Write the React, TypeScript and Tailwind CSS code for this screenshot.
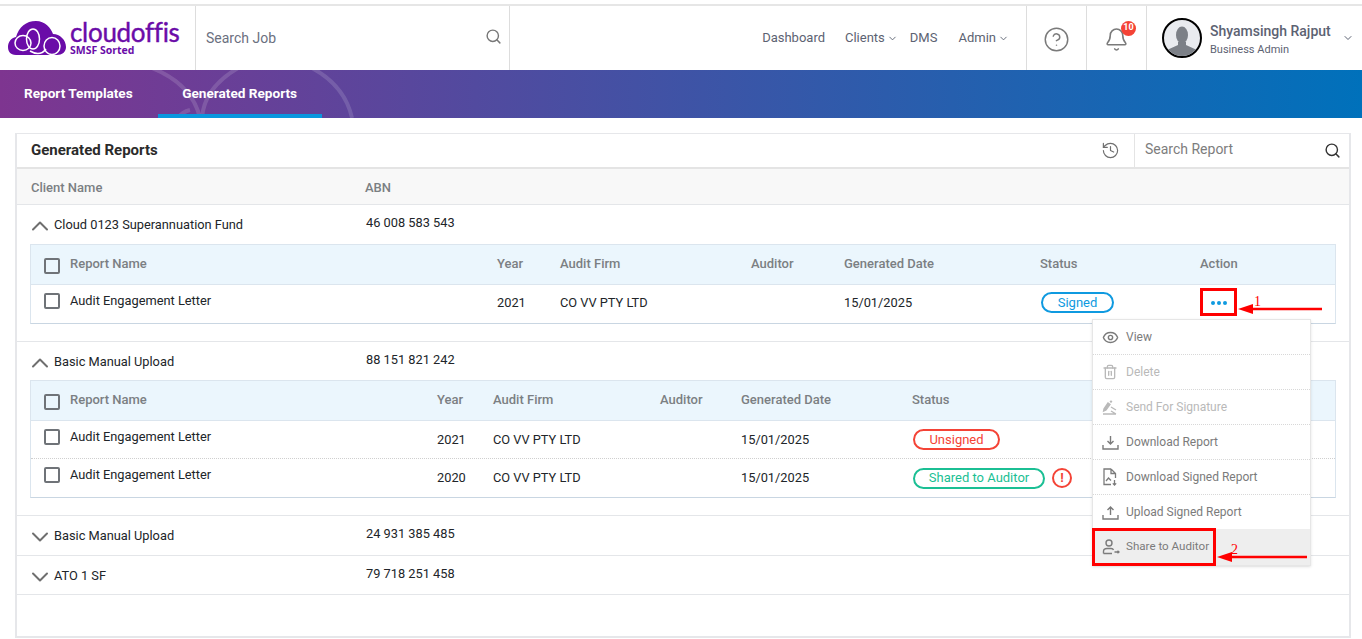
import React from "react";
import { ChevronDown, ChevronUp, CircleHelp, Bell, History, Search, Eye, Trash2 } from "lucide-react";

const roboto = { fontFamily: "Roboto, sans-serif" };

type Row = { year: string; status: React.ReactNode; action?: React.ReactNode };

const Pill = ({ label, color }: { label: string; color: "blue" | "red" | "green" }) => {
    const cls =
        color === "blue"
            ? "border-[#0f9ae0] text-[#0f9ae0] w-[73px]"
            : color === "red"
              ? "border-[#f44336] text-[#f44336] w-[87px]"
              : "border-[#1bbf94] text-[#1bbf94] w-[132px]";
    return (
        <span className={`ml-px inline-flex h-[21px] items-center justify-center rounded-full border-2 text-[13px] ${cls}`}>
            {label}
        </span>
    );
};

const Checkbox = () => <span className="block h-4 w-4 rounded-[2px] border-2 border-[#6f7378]" />;

const ReportTable = ({
    cols,
    rows,
    headClass,
    rowClass,
    nameClass,
    hideAction,
}: {
    cols: string;
    rows: Row[];
    headClass: string;
    rowClass: string;
    nameClass: string;
    hideAction?: boolean;
}) => (
    <div className="mx-[13px] border border-[#dbe5ee] border-b-[#c9d6e2]">
        <div className={`grid h-[39px] items-center bg-[#ebf6fd] text-[13px] font-medium text-[#7b7f83] ${cols} ${headClass}`}>
            <div className="flex items-center">
                <span className="ml-[13px] mr-[10px] translate-y-[2px]">
                    <Checkbox />
                </span>
                Report Name
            </div>
            <div>Year</div>
            <div>Audit Firm</div>
            <div>Auditor</div>
            <div>Generated Date</div>
            <div>Status</div>
            {/* sits under the open menu in the second table */}
            <div>{hideAction ? null : "Action"}</div>
        </div>
        {rows.map((row, index) => (
            <div
                key={index}
                className={`grid h-[38px] items-center border-t text-[12.8px] text-[#212529] last:h-[39px] ${cols} ${rowClass} ${
                    index === 0 ? "border-[#dbe5ee]" : "border-dotted border-[#cfcfcf]"
                }`}
            >
                <div className={`flex items-center ${nameClass}`}>
                    <span className="ml-[13px] mr-[10px]">
                        <Checkbox />
                    </span>
                    Audit Engagement Letter
                </div>
                <div>{row.year}</div>
                <div>CO VV PTY LTD</div>
                <div />
                <div>15/01/2025</div>
                <div className="flex items-center gap-[7px]">{row.status}</div>
                <div>{row.action}</div>
            </div>
        ))}
    </div>
);

const ClientRow = ({ name, abn, open, height }: { name: string; abn: string; open?: boolean; height: string }) => (
    <div className={`flex items-center text-[12.8px] text-[#212529] ${height}`}>
        <span className="ml-[9px] translate-y-[1px] text-[#6f6f6f]">
            {open ? <ChevronUp size={28} strokeWidth={1.7} /> : <ChevronDown size={28} strokeWidth={1.7} />}
        </span>
        <span className="w-[312px]">{name}</span>
        <span className="-translate-y-[2px]">{abn}</span>
    </div>
);

const SignIcon = () => (
    <svg width="16" height="16" viewBox="0 0 16 16" fill="none" stroke="currentColor" strokeWidth="1.4">
        <path d="M2 10 L6 4 L8 5.5 L4 11 L1.6 12 Z" fill="currentColor" />
        <circle cx="9" cy="2.6" r="1.2" fill="currentColor" stroke="none" />
        <path d="M9 8 L14 11 M1 15 H14 M9 12 L14 15" />
    </svg>
);

const SignedFileIcon = () => (
    <svg width="16" height="18" viewBox="0 0 16 18" fill="none" stroke="currentColor" strokeWidth="1.3">
        <path d="M9 1 H2 V16.5 H9 M9 1 L13.5 5.5 V10 M9 1 V5.5 H13.5" />
        <path d="M4 13 L6.5 10 L9 12.5" />
        <path d="M12.5 12 V17 M10.8 15.4 L12.5 17 L14.2 15.4" />
    </svg>
);

const ShareIcon = () => (
    <svg width="18" height="16" viewBox="0 0 18 16" fill="none" stroke="currentColor" strokeWidth="1.4">
        <circle cx="7" cy="4" r="3" />
        <path d="M1.5 14.5 V12.5 Q1.5 9.5 5 9.5 H9 Q11 9.5 11.5 11 M1.5 14.5 H10" />
        <path d="M12.5 13 H17 M15.5 11.8 L17 13 L15.5 14.2" />
    </svg>
);

const TrayIcon = ({ up }: { up?: boolean }) => (
    <svg width="17" height="15" viewBox="0 0 17 15" fill="none" stroke="currentColor" strokeWidth="1.4">
        <path d="M1 10 V14 H16 V10" />
        {up ? <path d="M8.5 10 V2 M5.5 5 L8.5 2 L11.5 5" /> : <path d="M8.5 1 V9 M5.5 6 L8.5 9 L11.5 6" />}
    </svg>
);

const menuItems = [
    { label: "View", icon: <Eye size={17} />, muted: false },
    { label: "Delete", icon: <Trash2 size={16} />, muted: true },
    { label: "Send For Signature", icon: <SignIcon />, muted: true },
    { label: "Download Report", icon: <TrayIcon />, muted: false },
    { label: "Download Signed Report", icon: <SignedFileIcon />, muted: false },
    { label: "Upload Signed Report", icon: <TrayIcon up />, muted: false },
    { label: "Share to Auditor", icon: <ShareIcon />, muted: false },
];

const RedArrow = ({ width }: { width: number }) => (
    <svg width={width} height="12" viewBox={`0 0 ${width} 12`} className="block">
        <path d={`M14 6 H${width}`} stroke="#f00" strokeWidth="2.4" />
        <path d="M0 6 L15 1 V11 Z" fill="#f00" />
    </svg>
);

const Logo = () => (
    <div className="ml-2 flex items-center">
        <svg width="58" height="34" viewBox="0 0 58 34">
            <path
                d="M8 34 C2 34 0 30 0 26 C0 21 3 17 8 16 C11 6 18 0 28 0 C37 0 43 7 45 13 C52 13 58 19 58 26 C58 31 54 34 49 34 Z"
                fill="#6a0ca8"
            />
            <g fill="none" stroke="#fff" strokeWidth="1.5">
                <ellipse cx="15" cy="22" rx="8" ry="7.5" />
                <ellipse cx="25" cy="18" rx="6.5" ry="10" />
                <ellipse cx="44" cy="25" rx="8" ry="8.5" />
                <path d="M22 30 Q32 36 38 28" />
            </g>
        </svg>
        <div className="ml-[4px] flex flex-col text-[#6a0ca8]" style={{ fontFamily: "Lato, sans-serif" }}>
            <span className="text-[26px] leading-[24px] tracking-[-0.3px] [-webkit-text-stroke:0.4px_#6a0ca8]">cloudoffis</span>
            <span className="text-[10.5px] font-bold leading-[12px]" style={{ fontFamily: "'Open Sans', sans-serif" }}>
                SMSF Sorted
            </span>
        </div>
    </div>
);

const Header = () => (
    <div className="flex h-[64px] items-stretch bg-white text-[#5c6272]">
        <div className="flex w-[196px] items-center border-r border-[#dddddd]">
            <Logo />
        </div>
        <div className="flex w-[314px] items-center justify-between border-r border-[#dddddd] pl-[10px] pr-[7px] text-[14px] text-[#6b7080]">
            Search Job
            <Search size={17} className="-translate-y-[2px] text-[#777777]" />
        </div>
        <div className="flex flex-1 items-center justify-end pr-[17px] text-[13px]">
            <span>Dashboard</span>
            <span className="ml-5 flex items-center">
                Clients
                <ChevronDown size={11} className="ml-[2px]" />
            </span>
            <span className="ml-[12px]">DMS</span>
            <span className="ml-[21px] flex items-center">
                Admin
                <ChevronDown size={11} className="ml-[2px]" />
            </span>
        </div>
        <div className="flex w-[61px] items-center justify-center border-x border-[#dddddd] pt-[2px] text-[#7a7a7a]">
            <CircleHelp size={27} strokeWidth={1.3} />
        </div>
        <div className="flex w-[60px] items-center justify-center border-r border-[#dddddd] pt-[2px] text-[#7a7a7a]">
            <div className="relative">
                <Bell size={25} strokeWidth={1.5} />
                <span className="absolute -right-[7px] -top-[6px] flex h-[15px] w-[15px] items-center justify-center rounded-full bg-[#f44336] text-[9px] font-bold text-white">
                    10
                </span>
            </div>
        </div>
        <div className="flex w-[215px] items-center pl-[15px]">
            <div className="flex h-10 w-10 items-end justify-center overflow-hidden rounded-full border-2 border-black bg-[#e9ebef]">
                <svg width="32" height="32" viewBox="0 0 32 32" fill="#7c8087">
                    <ellipse cx="16" cy="11" rx="6" ry="8.5" />
                    <path d="M12 18 H20 V21 L31 26 V32 H1 V26 L12 21 Z" />
                </svg>
            </div>
            <div className="ml-2 flex flex-col pt-[3px]">
                <span className="text-[14px] font-medium leading-[17px]">Shyamsingh Rajput</span>
                <span className="mt-[3px] text-[11px] leading-[13px]">Business Admin</span>
            </div>
            <ChevronDown size={12} className="ml-[11px]" />
        </div>
    </div>
);

const TabBar = () => (
    <div className="relative flex h-[48px] overflow-hidden bg-[linear-gradient(to_right,#7e3590,#0071bb)] text-[13.6px] font-bold text-white">
        <svg className="absolute left-[130px] top-0" width="240" height="48" viewBox="0 0 240 48" fill="none" stroke="#ffffff" strokeOpacity="0.14" strokeWidth="4">
            <path d="M22 -2 Q62 14 70 48" />
            <path d="M108 -2 Q74 18 72 48" />
            <path d="M182 -2 Q215 16 222 48" />
            <path d="M48 48 Q52 42 60 40" />
        </svg>
        <div className="relative ml-[24px] flex items-center pb-[2px]">Report Templates</div>
        <div className="relative ml-[25px] flex w-[164px] items-center justify-center border-b-[4px] border-[#0a97de] pt-[2px]">
            Generated Reports
        </div>
    </div>
);

const App = () => {
    return (
        <div className="relative h-[639px] overflow-hidden bg-white" style={roboto}>
            <div className="h-[6px] border-b-2 border-[#e6e6e6]" />
            <Header />
            <TabBar />
            <div className="ml-[15px] mt-[15px] h-[505px] w-[1336px] border-2 border-t border-[#e6e7ea]">
                <div className="flex h-[35px] items-center border-b-2 border-[#e4e4e4]">
                    <span className="ml-[14px] flex-1 text-[15px] font-bold text-[#2b2b2b]">Generated Reports</span>
                    <History size={19} strokeWidth={1.5} className="mr-[14px] text-[#6f6f6f]" />
                    <div className="flex h-full w-[215px] items-center justify-between border-l border-[#e4e4e4] pl-[10px] pr-[8px] text-[14px] text-[#7d7d7d]">
                        <span className="-translate-y-[1px]">Search Report</span>
                        <Search size={17} className="text-[#333333]" />
                    </div>
                </div>
                <div className="flex h-[36px] items-center border-b border-[#e4e6e9] bg-[#f8f8f8] pt-[2px] text-[13px] font-medium text-[#7b7f83]">
                    <span className="ml-[14px] w-[334px]">Client Name</span>
                    <span>ABN</span>
                </div>
                <div className="border-b border-[#e4e6e9] pb-[17px]">
                    <ClientRow name="Cloud 0123 Superannuation Fund" abn="46 008 583 543" open height="h-[39px]" />
                    <ReportTable
                        cols="grid-cols-[466px_63px_191px_93px_196px_160px_1fr]"
                        headClass="pb-[2px]"
                        rowClass="pb-[3px]"
                        nameClass="-translate-y-[2px]"
                        rows={[
                            {
                                year: "2021",
                                status: <Pill label="Signed" color="blue" />,
                                action: (
                                    <span className="ml-[11px] flex gap-[2px]">
                                        <i className="h-1 w-1 rounded-full bg-[#0f9ae0]" />
                                        <i className="h-1 w-1 rounded-full bg-[#0f9ae0]" />
                                        <i className="h-1 w-1 rounded-full bg-[#0f9ae0]" />
                                    </span>
                                ),
                            },
                        ]}
                    />
                </div>
                <div className="border-b border-[#e4e6e9] pb-[17px]">
                    <ClientRow name="Basic Manual Upload" abn="88 151 821 242" open height="h-[38px] pt-[2px]" />
                    <ReportTable
                        cols="grid-cols-[406px_56px_167px_81px_171px_190px_1fr]"
                        headClass="pb-[1px]"
                        rowClass=""
                        nameClass="-translate-y-[3px]"
                        hideAction
                        rows={[
                            { year: "2021", status: <Pill label="Unsigned" color="red" /> },
                            {
                                year: "2020",
                                status: (
                                    <>
                                        <Pill label="Shared to Auditor" color="green" />
                                        <span className="flex h-5 w-5 items-center justify-center rounded-full border-2 border-[#f44336] text-[13px] font-bold text-[#f44336]">
                                            !
                                        </span>
                                    </>
                                ),
                            },
                        ]}
                    />
                </div>
                <div className="border-b border-[#e4e6e9]">
                    <ClientRow name="Basic Manual Upload" abn="24 931 385 485" height="h-[39px]" />
                </div>
                <div className="border-b border-[#e4e6e9]">
                    <ClientRow name="ATO 1 SF" abn="79 718 251 458" height="h-[38px] pt-[2px]" />
                </div>
            </div>

            {/* action menu */}
            <div className="absolute left-[1092px] top-[319px] w-[219px] border border-[#e6e6e6] bg-white text-[12px] shadow-sm">
                {menuItems.map((item, index) => (
                    <div
                        key={index}
                        className={`flex items-center pl-[9px] ${index === 5 ? "h-[34px]" : index === 6 ? "h-[36px]" : "h-[35px]"} ${
                            index < 5 ? "border-b border-dotted border-[#d8d8d8]" : ""
                        } ${index === 6 ? "bg-[#eeeeee] text-[11.6px]" : ""} ${item.muted ? "text-[#b9b9b9]" : "text-[#7b7b7b]"}`}
                    >
                        <span className="flex w-[24px] justify-start">{item.icon}</span>
                        {item.label}
                    </div>
                ))}
            </div>

            {/* red annotations */}
            <div className="absolute left-[1200px] top-[288px] h-[28px] w-[37px] border-[3px] border-[#f00]" />
            <div className="absolute left-[1238px] top-[303px]">
                <RedArrow width={84} />
            </div>
            <span className="absolute left-[1254px] top-[293px] text-[14px] leading-[18px] text-[#f00]" style={{ fontFamily: "'Liberation Serif', serif" }}>
                1
            </span>
            <div className="absolute left-[1092px] top-[528px] h-[38px] w-[124px] border-[3px] border-[#f00]" />
            <div className="absolute left-[1217px] top-[551px]">
                <RedArrow width={90} />
            </div>
            <span className="absolute left-[1231px] top-[541px] text-[14px] leading-[18px] text-[#f00]" style={{ fontFamily: "'Liberation Serif', serif" }}>
                2
            </span>
        </div>
    );
};

export default App;
